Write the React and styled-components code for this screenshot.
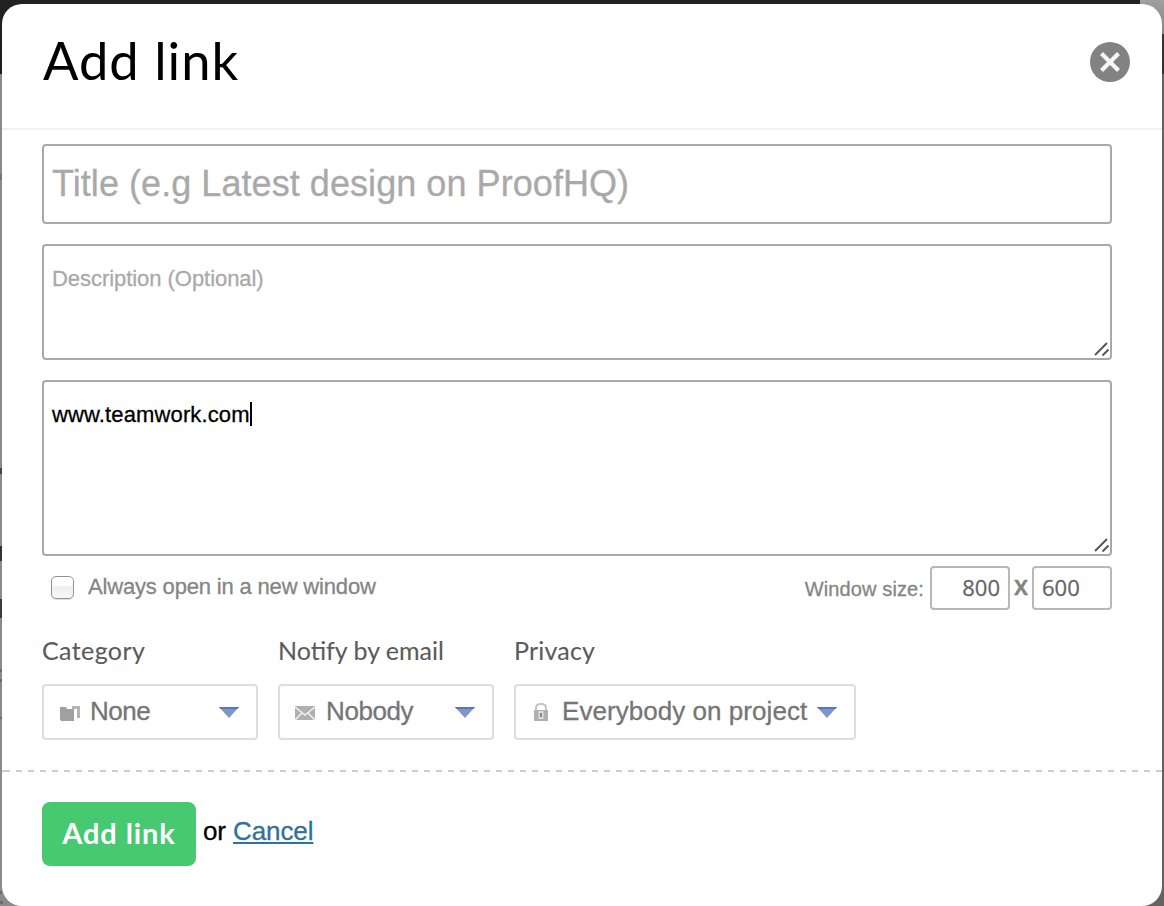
import React from "react";
import styled, { createGlobalStyle } from "styled-components";

const GlobalStyle = createGlobalStyle`
  * { box-sizing: border-box; }
  html, body { margin: 0; padding: 0; overflow: hidden; }
  body {
    font-family: "Liberation Sans", Arial, sans-serif;
    background: #222;
    -webkit-text-stroke: 0.3px currentColor;
  }
`;

const Backdrop = styled.div`
  width: 1164px;
  height: 906px;
  padding: 4px 2px 0;
  background:
    linear-gradient(#a0a0a0, #858585) 100% 0 / 24px 34px no-repeat,
    linear-gradient(#333, #303030) 100% 34px / 2px 40px no-repeat,
    linear-gradient(#222, #222) 0 0 / 100% 4px no-repeat,
    linear-gradient(#222, #1c1c1c) 0 0 / 30px 74px no-repeat,
    linear-gradient(#757575, #757575) 0 174px / 2px 6px no-repeat,
    linear-gradient(#444, #444) 0 468px / 2px 6px no-repeat,
    linear-gradient(#333, #333) 0 546px / 2px 15px no-repeat,
    linear-gradient(#3b3b3b, #3b3b3b) 0 599px / 2px 19px no-repeat,
    linear-gradient(#75685f, #75685f) 0 669px / 2px 3px no-repeat,
    linear-gradient(#75685f, #75685f) 0 679px / 2px 3px no-repeat,
    linear-gradient(#75685f, #75685f) 0 717px / 2px 2px no-repeat,
    linear-gradient(#75685f, #75685f) 0 891px / 2px 3px no-repeat,
    linear-gradient(#75685f, #75685f) 0 901px / 3px 3px no-repeat,
    linear-gradient(90deg, #8a8a8a 50%, #636363 50%);
`;

const Dialog = styled.form`
  height: 902px;
  background: #fff;
  border-radius: 20px;
  overflow: hidden;
`;

const Header = styled.header`
  display: flex;
  justify-content: space-between;
  align-items: flex-start;
  height: 126px;
  padding: 38px 32px 0 40px;
  border-bottom: 2px solid #f1f1f1;
`;

const Heading = styled.h1`
  margin: -14px 0 0 1px;
  font: 400 52.5px/64px Lato, sans-serif;
  letter-spacing: 1px;
  color: #000;
  -webkit-text-stroke: 0;
`;

const CloseButton = styled.button`
  display: block;
  width: 40px;
  height: 40px;
  padding: 0;
  border: 0;
  background: none;
`;

const Body = styled.div`
  display: flex;
  flex-direction: column;
  height: 640px;
  padding: 14px 50px 0 40px;
`;

const Field = styled.div`
  display: flex;
  justify-content: space-between;
  align-items: flex-end;
  height: ${(p) => p.$height}px;
  margin-bottom: ${(p) => p.$gap ?? 20}px;
  border: 2px solid #a9a9a9;
  border-radius: 4px;
  background: #fff;
`;

const FieldText = styled.span`
  align-self: flex-start;
  display: flex;
  align-items: center;
  padding: ${(p) => p.$top}px 0 0 8px;
  font-size: ${(p) => p.$size}px;
  line-height: ${(p) => p.$line}px;
  letter-spacing: ${(p) => p.$spacing ?? 0}px;
  color: ${(p) => p.$color ?? "#a9a9a9"};
  white-space: nowrap;
`;

const Caret = styled.i`
  width: 2px;
  height: 24px;
  margin-bottom: 2px;
  background: #000;
`;

const Grip = styled.svg`
  display: block;
  width: 16px;
  height: 16px;
  margin: 0 0 1px 0;
`;

const OptionRow = styled.div`
  display: flex;
  align-items: flex-start;
  justify-content: space-between;
  height: 58px;
`;

const CheckLabel = styled.label`
  display: flex;
  align-items: center;
  gap: 14px;
  padding: 8px 0 0 9px;
  font-size: 22px;
  line-height: 26px;
  letter-spacing: -0.17px;
  color: #858585;
`;

const Checkbox = styled.span`
  width: 23px;
  height: 23px;
  border: 1.5px solid #929292;
  border-radius: 5px;
  background: linear-gradient(#fff 35%, #efefef 50%, #f8f8f8);
  box-shadow: 0 1px 1px #ddd;
`;

const SizeGroup = styled.div`
  display: flex;
  align-items: center;
  height: 44px;
  color: #858585;
  font-size: 20px;
`;

const SizeLabel = styled.span`
  margin: 2px 6px 0 0;
  letter-spacing: 0.12px;
`;

const SizeInput = styled.span`
  width: 80px;
  height: 44px;
  padding: 0 8px 0 8px;
  border: 2px solid #b8b8b8;
  border-radius: 4px;
  font: 22px/39px "Open Sans", sans-serif;
  color: #666;
  text-align: ${(p) => p.$align};
`;

const Times = styled.b`
  width: 22px;
  margin-bottom: 2px;
  text-align: center;
  font: 700 21px/40px "Open Sans", sans-serif;
`;

const Pickers = styled.div`
  display: flex;
  gap: 20px;
`;

const Picker = styled.div`
  width: ${(p) => p.$width}px;
`;

const PickerLabel = styled.div`
  height: 60px;
  padding-top: 10px;
  font: 400 25px/32px Lato, sans-serif;
  letter-spacing: ${(p) => p.$spacing}px;
  color: #5b5b5b;
  white-space: nowrap;
  -webkit-text-stroke: 0.1px currentColor;
`;

const Select = styled.div`
  display: flex;
  align-items: center;
  height: 56px;
  padding: 0 17px 2px 14px;
  border: 2px solid #ddd;
  border-radius: 4px;
  font-size: 26px;
  letter-spacing: ${(p) => p.$spacing}px;
  color: #757575;
  white-space: nowrap;
`;

const SelectIcon = styled.svg`
  flex: none;
  width: 24px;
  height: 22px;
  margin: 3px 8px 0 0;
`;

const Arrow = styled.svg`
  flex: none;
  width: 20px;
  height: 11px;
  margin: 3px 0 0 auto;
`;

const Footer = styled.footer`
  display: flex;
  align-items: flex-start;
  height: 136px;
  padding: 32px 40px 0;
  background:
    linear-gradient(#ccc, #ccc) 0 0 / 4px 2px no-repeat,
    repeating-linear-gradient(90deg, transparent 0 2px, #ccc 2px 8px, transparent 8px 12px) 0 0 / 100% 2px no-repeat;
`;

const Submit = styled.button`
  width: 154px;
  height: 64px;
  padding: 0 0 2px;
  border: 0;
  border-radius: 8px;
  background: #46c971;
  color: #fff;
  font: 700 29px/62px Lato, sans-serif;
  letter-spacing: 0.9px;
  -webkit-text-stroke: 0;
`;

const CancelText = styled.div`
  margin: 13px 0 0 7px;
  font-size: 26px;
  line-height: 32px;
  letter-spacing: -0.1px;
  color: #000;
`;

const CancelLink = styled.a`
  color: #2f729a;
  text-decoration: underline;
  text-decoration-thickness: 2px;
  text-underline-offset: 2px;
`;

const ResizeGrip = () => (
  <Grip viewBox="0 0 16 16" stroke="#555" strokeWidth="1.9">
    <path d="M1 14 13 2M8.5 14.5 14.5 8.5" />
  </Grip>
);

const FolderIcon = () => (
  <SelectIcon viewBox="0 0 24 22" fill="#a0a0a0">
    <path d="M2 5h6l1 2h7v12H3l-1-2z" />
    <path d="M14 4h8v12h-3V7h-5z" fill="#b4b4b4" />
  </SelectIcon>
);

const MailIcon = () => (
  <SelectIcon viewBox="0 0 24 22">
    <path d="M1 4h20v14H1z" fill="#b0b0b0" />
    <path d="m1 5 10 8L21 5M1 18l7-7m13 7-7-7" fill="none" stroke="#f2f2f2" strokeWidth="1.500" />
  </SelectIcon>
);

const LockIcon = () => (
  <SelectIcon viewBox="0 0 24 22">
    <path d="M6 10V6q0-4 5-4t5 4v4" fill="none" stroke="#c4c4c4" strokeWidth="2" />
    <path d="M4 8h14v11H4z" fill="#b0b0b0" />
    <path d="M8.500 9h5v8h-5z" fill="#dedede" />
    <path d="M10 11h2v4h-2z" fill="#888" />
  </SelectIcon>
);

const pickers = [
  { label: "Category", value: "None", width: 216, Icon: FolderIcon, ls: 0.4, vs: -0.5 },
  { label: "Notify by email", value: "Nobody", width: 216, Icon: MailIcon, ls: 0, vs: -0.4 },
  { label: "Privacy", value: "Everybody on project", width: 342, Icon: LockIcon, ls: 0.2, vs: 0.05 },
];

export default function App() {
  return (
    <>
      <GlobalStyle />
      <Backdrop>
        <Dialog>
          <Header>
            <Heading>Add link</Heading>
            <CloseButton type="button" aria-label="Close">
              <svg width="40" height="40" viewBox="0 0 40 40">
                <circle cx="20" cy="20" r="20" fill="#828282" />
                <path d="m11.500 11.500 17 17m0-17-17 17" stroke="#f6f6f6" strokeWidth="4.200" />
              </svg>
            </CloseButton>
          </Header>
          <Body>
            <Field $height={80}>
              <FieldText $top={16} $size={36} $line={44} $spacing={0.06}>
                Title (e.g Latest design on ProofHQ)
              </FieldText>
            </Field>
            <Field $height={116}>
              <FieldText $top={20} $size={22} $line={26} $spacing={-0.05}>
                Description (Optional)
              </FieldText>
              <ResizeGrip />
            </Field>
            <Field $height={176} $gap={10}>
              <FieldText $top={20} $size={22} $line={26} $spacing={0.13} $color="#000">
                www.teamwork.com<Caret />
              </FieldText>
              <ResizeGrip />
            </Field>
            <OptionRow>
              <CheckLabel>
                <Checkbox />
                Always open in a new window
              </CheckLabel>
              <SizeGroup>
                <SizeLabel>Window size:</SizeLabel>
                <SizeInput $align="right">800</SizeInput>
                <Times>X</Times>
                <SizeInput $align="left">600</SizeInput>
              </SizeGroup>
            </OptionRow>
            <Pickers>
              {pickers.map(({ label, value, width, Icon, ls, vs }) => (
                <Picker key={label} $width={width}>
                  <PickerLabel $spacing={ls}>{label}</PickerLabel>
                  <Select $spacing={vs}>
                    <Icon />
                    {value}
                    <Arrow viewBox="0 0 20 11">
                      <path d="M0 0h20L10 11z" fill="#7f96cb" />
                      <path d="M0 0h20l-1.500 2h-17z" fill="#5877b8" />
                    </Arrow>
                  </Select>
                </Picker>
              ))}
            </Pickers>
          </Body>
          <Footer>
            <Submit type="button">Add link</Submit>
            <CancelText>
              or <CancelLink>Cancel</CancelLink>
            </CancelText>
          </Footer>
        </Dialog>
      </Backdrop>
    </>
  );
}
